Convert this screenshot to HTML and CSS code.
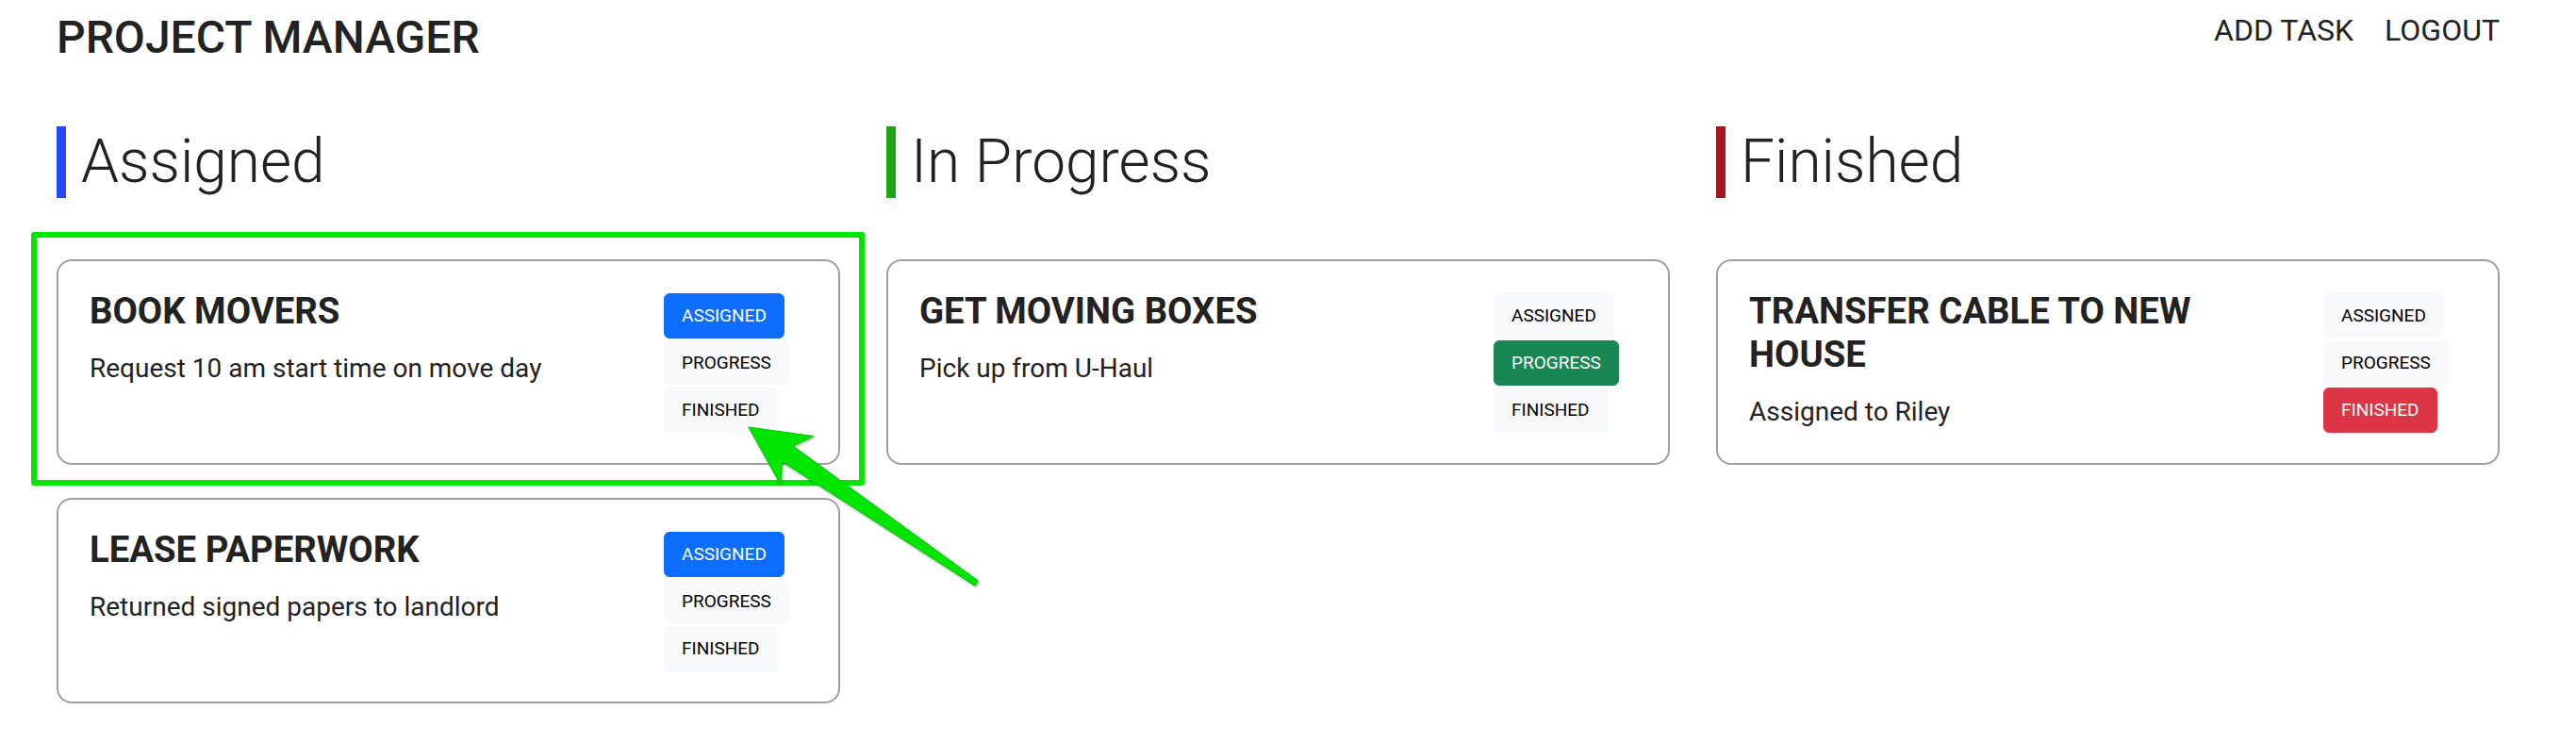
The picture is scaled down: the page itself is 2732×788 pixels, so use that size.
FILE: index.html
```html
<!DOCTYPE html>
<html lang="en">
<head>
<meta charset="utf-8">
<title>Project Manager</title>
<link rel="stylesheet" href="styles.css">
</head>
<body>
<div class="page">
  <header class="topbar">
    <div class="brand">PROJECT MANAGER</div>
    <nav class="nav">
      <a class="nav-link" href="#">ADD TASK</a>
      <a class="nav-link" href="#">LOGOUT</a>
    </nav>
  </header>

  <main class="board">
    <section class="column">
      <h2 class="column-title title-assigned">Assigned</h2>
      <div class="card">
        <div class="card-text">
          <h3 class="card-title">BOOK MOVERS</h3>
          <p class="card-desc">Request 10 am start time on move day</p>
        </div>
        <div class="status-buttons">
          <button class="btn btn-primary">ASSIGNED</button>
          <button class="btn btn-light">PROGRESS</button>
          <button class="btn btn-light">FINISHED</button>
        </div>
      </div>
      <div class="card">
        <div class="card-text">
          <h3 class="card-title">LEASE PAPERWORK</h3>
          <p class="card-desc">Returned signed papers to landlord</p>
        </div>
        <div class="status-buttons">
          <button class="btn btn-primary">ASSIGNED</button>
          <button class="btn btn-light">PROGRESS</button>
          <button class="btn btn-light">FINISHED</button>
        </div>
      </div>
    </section>

    <section class="column">
      <h2 class="column-title title-progress">In Progress</h2>
      <div class="card">
        <div class="card-text">
          <h3 class="card-title">GET MOVING BOXES</h3>
          <p class="card-desc">Pick up from U-Haul</p>
        </div>
        <div class="status-buttons">
          <button class="btn btn-light">ASSIGNED</button>
          <button class="btn btn-success">PROGRESS</button>
          <button class="btn btn-light">FINISHED</button>
        </div>
      </div>
    </section>

    <section class="column">
      <h2 class="column-title title-finished">Finished</h2>
      <div class="card">
        <div class="card-text">
          <h3 class="card-title">TRANSFER CABLE TO NEW HOUSE</h3>
          <p class="card-desc">Assigned to Riley</p>
        </div>
        <div class="status-buttons">
          <button class="btn btn-light">ASSIGNED</button>
          <button class="btn btn-light">PROGRESS</button>
          <button class="btn btn-danger">FINISHED</button>
        </div>
      </div>
    </section>
  </main>

  <div class="highlight-box"></div>
  <svg class="highlight-arrow" width="2732" height="788" viewBox="0 0 2732 788" xmlns="http://www.w3.org/2000/svg">
    <g transform="translate(794 453) rotate(34.4)">
      <polygon points="0,0 62,-31 50,-10 293,-3 293,3 50,10 62,31" fill="#00e600" stroke="#00c800" stroke-width="1" stroke-linejoin="round"/>
    </g>
  </svg>
</div>
</body>
</html>
```

FILE: styles.css
```css
* {
  box-sizing: border-box;
}

html, body {
  margin: 0;
  padding: 0;
  background: #ffffff;
}

body {
  font-family: Roboto, "Liberation Sans", Arial, sans-serif;
  color: #212529;
}

.page {
  position: relative;
  width: 2732px;
  min-height: 788px;
  padding: 12px 81px 0 60px;
}

.topbar {
  display: flex;
  justify-content: space-between;
  align-items: flex-start;
}

.brand {
  font-size: 48px;
  font-weight: 500;
  line-height: 56px;
  color: #222222;
}

.nav {
  display: flex;
  gap: 33px;
  margin-top: 2px;
}

.nav-link {
  font-size: 32px;
  font-weight: 400;
  line-height: 37px;
  color: #222222;
  text-decoration: none;
}

.board {
  display: grid;
  grid-template-columns: repeat(3, 831px);
  column-gap: 49px;
  margin-top: 66px;
}

.column {
  display: flex;
  flex-direction: column;
}

.column-title {
  margin: 0 0 65px 0;
  font-size: 64px;
  font-weight: 300;
  line-height: 76px;
  padding-left: 16px;
  border-left: 10px solid #2449f5;
  color: #222222;
}

.title-assigned { border-left-color: #2449f5; }
.title-progress { border-left-color: #1ea514; }
.title-finished { border-left-color: #a8161d; }

.card {
  display: grid;
  grid-template-columns: 1fr 153px;
  column-gap: 47px;
  border: 2px solid #9e9e9e;
  border-radius: 16px;
  padding: 30px 32px 32px 33px;
  margin-bottom: 35px;
  background: #ffffff;
}

.card-title {
  margin: 0 0 18px 0;
  font-size: 38.3px;
  font-weight: 700;
  line-height: 46px;
  color: #222222;
}

.card-desc {
  margin: 0;
  font-size: 28px;
  font-weight: 400;
  line-height: 40px;
  color: #222222;
}

.status-buttons {
  display: flex;
  flex-direction: column;
  align-items: flex-start;
  gap: 2px;
  padding-top: 4px;
}

.btn {
  display: block;
  font-family: Roboto, "Liberation Sans", Arial, sans-serif;
  font-size: 19px;
  font-weight: 400;
  line-height: 30px;
  padding: 8px 18px;
  height: 48px;
  border: 1px solid transparent;
  border-radius: 6px;
  cursor: pointer;
}

.btn-primary {
  background: #0d6efd;
  border-color: #0d6efd;
  color: #ffffff;
}

.btn-success {
  background: #198754;
  border-color: #198754;
  color: #ffffff;
}

.btn-danger {
  background: #dc3545;
  border-color: #dc3545;
  color: #ffffff;
}

.btn-light {
  background: #f8f9fa;
  border-color: #f8f9fa;
  color: #000000;
}

.highlight-box {
  position: absolute;
  left: 33px;
  top: 246px;
  width: 884px;
  height: 269px;
  border: 6px solid #00e600;
  border-radius: 3px;
  pointer-events: none;
}

.highlight-arrow {
  position: absolute;
  left: 0;
  top: 0;
  pointer-events: none;
  filter: drop-shadow(1px 2px 1px rgba(0, 90, 0, 0.35));
}
```
